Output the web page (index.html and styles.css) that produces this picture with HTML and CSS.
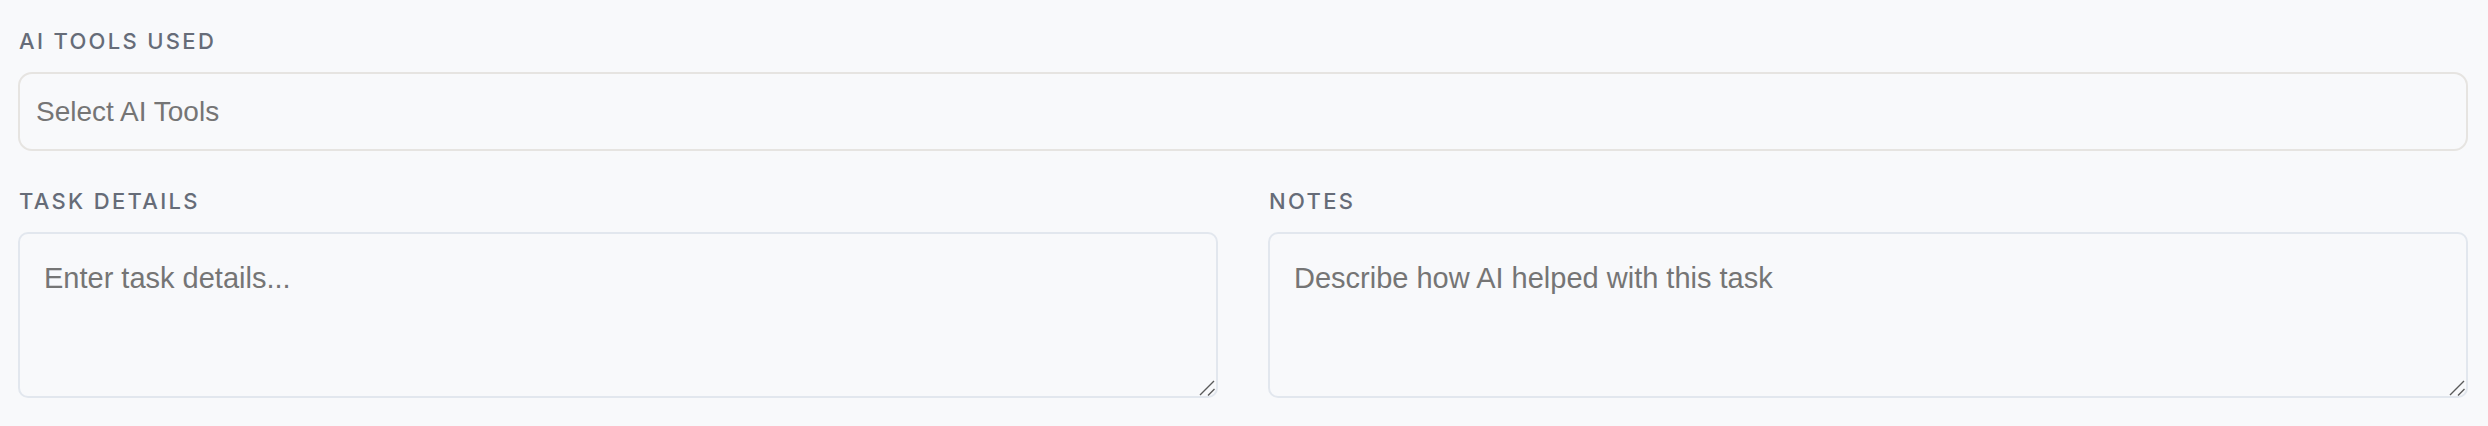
FILE: index.html
```html
<!DOCTYPE html>
<html>
<head>
<meta charset="utf-8">
<link rel="stylesheet" href="styles.css">
</head>
<body>
<div class="form">
  <div class="field">
    <label class="label">AI Tools Used</label>
    <input class="select-input" type="text" placeholder="Select AI Tools">
  </div>
  <div class="row">
    <div class="field">
      <label class="label">Task Details</label>
      <div class="area-wrap">
        <textarea class="area" placeholder="Enter task details..."></textarea>
        <svg class="grip" width="18" height="18" viewBox="0 0 18 18"><path d="M2 16 L16 2 M10 16.5 L16.5 10" stroke="#5a5a5a" stroke-width="1.4" fill="none"/></svg>
      </div>
    </div>
    <div class="field">
      <label class="label">Notes</label>
      <div class="area-wrap">
        <textarea class="area" placeholder="Describe how AI helped with this task"></textarea>
        <svg class="grip" width="18" height="18" viewBox="0 0 18 18"><path d="M2 16 L16 2 M10 16.5 L16.5 10" stroke="#5a5a5a" stroke-width="1.4" fill="none"/></svg>
      </div>
    </div>
  </div>
</div>
</body>
</html>
```
FILE: styles.css
```css
html, body {
  margin: 0;
  padding: 0;
  background: #f8f9fb;
}
.form {
  padding: 25px 20px 0 18px;
  display: flex;
  flex-direction: column;
  gap: 34px;
}
.field {
  display: flex;
  flex-direction: column;
  gap: 14px;
}
.row {
  display: grid;
  grid-template-columns: 1fr 1fr;
  gap: 50px;
}
.label {
  font-family: Inter, "Noto Sans", sans-serif;
  font-size: 22px;
  line-height: 33px;
  font-weight: 500;
  letter-spacing: 0.105em;
  text-transform: uppercase;
  color: #666c78;
  padding-left: 1px;
}
.select-input {
  box-sizing: border-box;
  height: 79px;
  width: 100%;
  margin: 0;
  border: 2px solid #e6e4e1;
  border-radius: 14px;
  background: #f8f9fb;
  padding: 0 16px;
  font-family: "Liberation Sans", Arial, sans-serif;
  font-size: 28px;
  color: #333;
  outline: none;
}
.area-wrap {
  position: relative;
  display: flex;
}
.area {
  box-sizing: border-box;
  height: 166px;
  width: 100%;
  margin: 0;
  border: 2px solid #e2e7ee;
  border-radius: 10px;
  background: #f8f9fb;
  padding: 24px 24px;
  font-family: "Liberation Sans", Arial, sans-serif;
  font-size: 29px;
  line-height: 1.4;
  color: #333;
  outline: none;
  resize: none;
}
.grip {
  position: absolute;
  right: 2px;
  bottom: 1px;
  pointer-events: none;
}
.select-input::placeholder,
.area::placeholder {
  color: #757575;
}
```
